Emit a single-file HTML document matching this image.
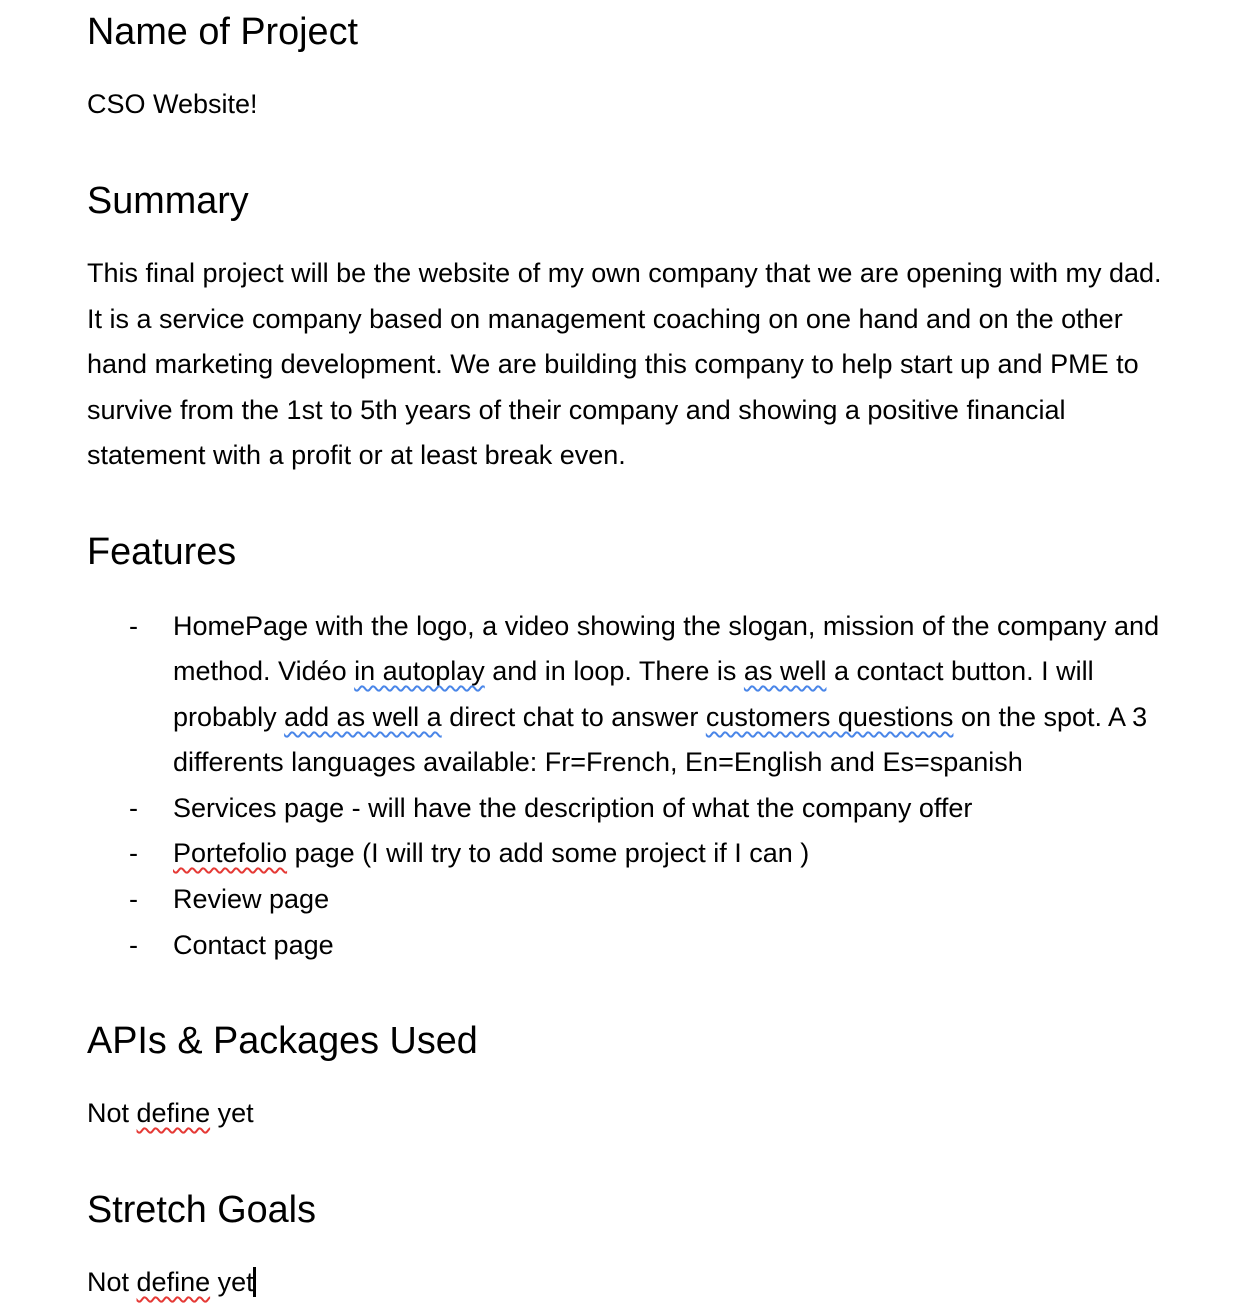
<!DOCTYPE html>
<html><head><meta charset="utf-8"><style>
html,body{margin:0;padding:0;background:#fff;}
body{width:1254px;height:1310px;position:relative;overflow:hidden;font-family:"Liberation Sans",Arial,sans-serif;color:#000;}
.l{position:absolute;left:87px;white-space:nowrap;line-height:46px;height:46px;font-size:27px;}
.h{font-size:37.8px;}
.li{left:173px;}
.d{position:absolute;left:129px;font-size:27px;line-height:46px;}
.b{text-decoration:underline wavy #4a86e8;text-decoration-thickness:1.5px;text-underline-offset:5px;text-decoration-skip-ink:none;}
.r{text-decoration:underline wavy #e53935;text-decoration-thickness:1.5px;text-underline-offset:5px;text-decoration-skip-ink:none;}
.cur{display:inline-block;width:3px;height:30px;background:#000;vertical-align:-6px;margin-left:-1px;}
</style></head><body>
<div class="l h" style="top:9px">Name of Project</div>
<div class="l" style="top:81px">CSO Website!</div>
<div class="l h" style="top:178px">Summary</div>
<div class="l" style="top:250px">This final project will be the website of my own company that we are opening with my dad.</div>
<div class="l" style="top:296px">It is a service company based on management coaching on one hand and on the other</div>
<div class="l" style="top:341px">hand marketing development. We are building this company to help start up and PME to</div>
<div class="l" style="top:387px">survive from the 1st to 5th years of their company and showing a positive financial</div>
<div class="l" style="top:432px">statement with a profit or at least break even.</div>
<div class="l h" style="top:529px">Features</div>
<div class="d" style="top:603px">-</div>
<div class="l li" style="top:603px">HomePage with the logo, a video showing the slogan, mission of the company and</div>
<div class="l li" style="top:648px">method. Vidéo <span class="b">in autoplay</span> and in loop. There is <span class="b">as well</span> a contact button. I will</div>
<div class="l li" style="top:694px">probably <span class="b">add as well a</span> direct chat to answer <span class="b">customers questions</span> on the spot. A 3</div>
<div class="l li" style="top:739px">differents languages available: Fr=French, En=English and Es=spanish</div>
<div class="d" style="top:785px">-</div>
<div class="l li" style="top:785px">Services page - will have the description of what the company offer</div>
<div class="d" style="top:830px">-</div>
<div class="l li" style="top:830px"><span class="r">Portefolio</span> page (I will try to add some project if I can )</div>
<div class="d" style="top:876px">-</div>
<div class="l li" style="top:876px">Review page</div>
<div class="d" style="top:922px">-</div>
<div class="l li" style="top:922px">Contact page</div>
<div class="l h" style="top:1018px">APIs &amp; Packages Used</div>
<div class="l" style="top:1090px">Not <span class="r">define</span> yet</div>
<div class="l h" style="top:1187px">Stretch Goals</div>
<div class="l" style="top:1259px">Not <span class="r">define</span> yet<span class="cur"></span></div>
</body></html>
